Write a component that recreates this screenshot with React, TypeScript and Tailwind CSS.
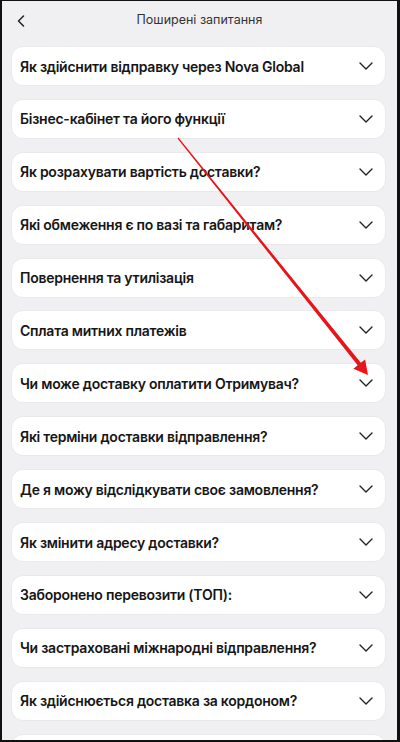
import React from "react";

const questions = [
  "Як здійснити відправку через Nova Global",
  "Бізнес-кабінет та його функції",
  "Як розрахувати вартість доставки?",
  "Які обмеження є по вазі та габаритам?",
  "Повернення та утилізація",
  "Сплата митних платежів",
  "Чи може доставку оплатити Отримувач?",
  "Які терміни доставки відправлення?",
  "Де я можу відслідкувати своє замовлення?",
  "Як змінити адресу доставки?",
  "Заборонено перевозити (ТОП):",
  "Чи застраховані міжнародні відправлення?",
  "Як здійснюється доставка за кордоном?",
  "",
];

function ChevronDown() {
  return (
    <svg width="14" height="8" viewBox="0 0 14 8" fill="none" className="shrink-0">
      <path d="M1 1L7 7L13 1" stroke="#222" strokeWidth="1.4" strokeLinecap="round" strokeLinejoin="round" />
    </svg>
  );
}

// red annotation arrow drawn over the screenshot
function Arrow() {
  const sx = 176, sy = 137, tx = 366, ty = 374;
  const len = Math.hypot(tx - sx, ty - sy);
  const ux = (tx - sx) / len, uy = (ty - sy) / len;
  const nx = -uy, ny = ux;
  const headLen = 14, headW = 7.5;
  const bx = tx - headLen * ux, by = ty - headLen * uy;
  const pts = [
    [sx + nx * 0.6, sy + ny * 0.6],
    [bx + nx * 2, by + ny * 2],
    [bx + nx * headW, by + ny * headW],
    [tx, ty],
    [bx - nx * headW, by - ny * headW],
    [bx - nx * 2, by - ny * 2],
    [sx - nx * 0.6, sy - ny * 0.6],
  ]
    .map((p) => p.join(","))
    .join(" ");
  return (
    <svg className="absolute inset-0 pointer-events-none" width="400" height="742">
      <polygon points={pts} fill="#e3161b" />
    </svg>
  );
}

export default function App() {
  return (
    <div
      className="relative w-[400px] h-[742px] overflow-hidden bg-[#f0f0f2] border-t border-l-2 border-r-[3px] border-b-2 border-[#111]"
      style={{ fontFamily: "Inter, 'Noto Sans', sans-serif" }}
    >
      <header className="h-[39px] flex items-center relative">
        <svg width="8" height="12" viewBox="0 0 8 12" fill="none" className="ml-[15px]">
          <path d="M6.5 1L1.5 6L6.5 11" stroke="#222" strokeWidth="1.5" strokeLinecap="round" strokeLinejoin="round" />
        </svg>
        <h1 className="absolute left-0 right-0 text-center text-[12.5px] text-[#333]">Поширені запитання</h1>
      </header>

      <div className="flex flex-col gap-[12.9px] pt-[6px] pl-[9px] pr-[11px]">
        {questions.map((q, i) => (
          <div
            key={i}
            className="h-[40px] shrink-0 flex items-center justify-between bg-white rounded-[12px] border border-[#e9e9ec] pl-[8px] pr-[12px]"
          >
            <span className="text-[14px] font-semibold text-[#161616] tracking-[-0.25px]">{q}</span>
            {q && <ChevronDown />}
          </div>
        ))}
      </div>

      <Arrow />
    </div>
  );
}
